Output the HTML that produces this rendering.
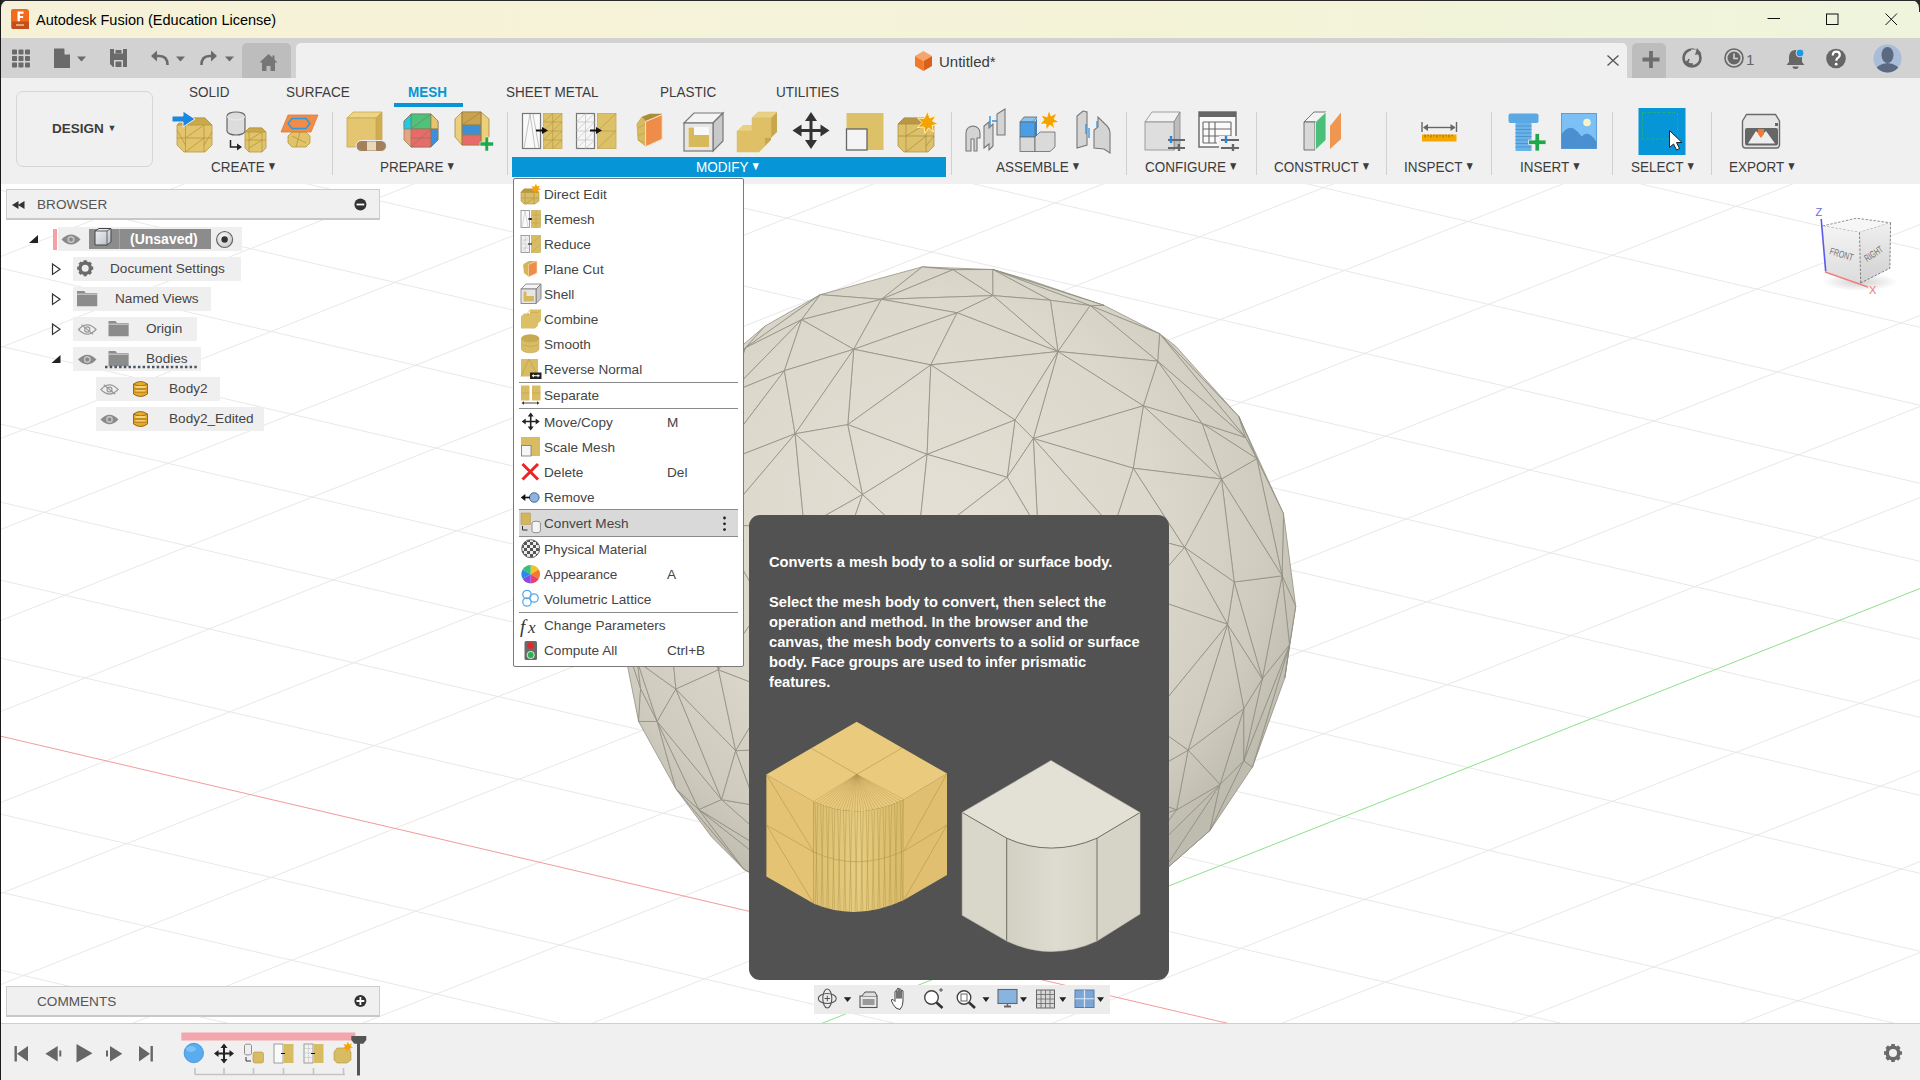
<!DOCTYPE html>
<html><head><meta charset="utf-8">
<style>
*{box-sizing:border-box}
html,body{margin:0;padding:0}
body{width:1920px;height:1080px;overflow:hidden;position:relative;font-family:"Liberation Sans",sans-serif;background:#fff;color:#3c3c3c}
.a{position:absolute}
.t{position:absolute;white-space:nowrap;line-height:1}
#title{left:0;top:0;width:1920px;height:38px;background:linear-gradient(90deg,#f6f2d9 0%,#f4f3d8 60%,#eef5dc 100%)}
#tabrow{left:0;top:38px;width:1920px;height:40px;background:#d2d2d2}
#toolbar{left:0;top:78px;width:1920px;height:106px;background:#f0f0f0}
#vp{left:0;top:184px;width:1920px;height:840px;overflow:hidden}
#timeline{left:0;top:1023px;width:1920px;height:57px;background:#f0f0f0;border-top:1px solid #cfcfcf}
.sep{position:absolute;width:1px;background:#d0d0d0;top:112px;height:63px}
.tab{font-size:13.5px;color:#3c3c3c;top:85px;transform:scaleY(1.08);transform-origin:0 0}
.grp{font-size:13.5px;color:#3c3c3c;top:159px;transform:scaleY(1.14);transform-origin:0 0}
.grp i{font-style:normal;font-size:10.5px;position:relative;top:-1.5px;margin-left:2px}
.mi{position:absolute;left:544px;font-size:13.6px;color:#454545;white-space:nowrap;line-height:1}
.sc{position:absolute;left:667px;font-size:13.6px;color:#454545;line-height:1}
.msep{position:absolute;left:519px;width:219px;height:1px;background:#8a8a8a}
.br{position:absolute;font-size:13.6px;color:#454545;white-space:nowrap;line-height:1}
.bg{position:absolute;background:#efefef}
</style></head><body>
<!-- viewport -->
<div id="vp" class="a">
<svg width="1920" height="840" viewBox="0 184 1920 840" style="position:absolute;left:0;top:0">
<g stroke="#e8e8e8" stroke-width="1"><line x1="0" y1="-278.0" x2="1920" y2="171.3"/><line x1="0" y1="-200.0" x2="1920" y2="249.3"/><line x1="0" y1="-122.0" x2="1920" y2="327.3"/><line x1="0" y1="-44.0" x2="1920" y2="405.3"/><line x1="0" y1="34.0" x2="1920" y2="483.3"/><line x1="0" y1="112.0" x2="1920" y2="561.3"/><line x1="0" y1="190.0" x2="1920" y2="639.3"/><line x1="0" y1="268.0" x2="1920" y2="717.3"/><line x1="0" y1="346.0" x2="1920" y2="795.3"/><line x1="0" y1="424.0" x2="1920" y2="873.3"/><line x1="0" y1="502.0" x2="1920" y2="951.3"/><line x1="0" y1="580.0" x2="1920" y2="1029.3"/><line x1="0" y1="658.0" x2="1920" y2="1107.3"/><line x1="0" y1="814.0" x2="1920" y2="1263.3"/><line x1="0" y1="892.0" x2="1920" y2="1341.3"/><line x1="0" y1="970.0" x2="1920" y2="1419.3"/><line x1="0" y1="1048.0" x2="1920" y2="1497.3"/><line x1="0" y1="1803.8" x2="1920" y2="1043.5"/><line x1="0" y1="1712.8" x2="1920" y2="952.5"/><line x1="0" y1="1621.8" x2="1920" y2="861.5"/><line x1="0" y1="1530.8" x2="1920" y2="770.5"/><line x1="0" y1="1439.8" x2="1920" y2="679.5"/><line x1="0" y1="1257.8" x2="1920" y2="497.5"/><line x1="0" y1="1166.8" x2="1920" y2="406.5"/><line x1="0" y1="1075.8" x2="1920" y2="315.5"/><line x1="0" y1="984.8" x2="1920" y2="224.5"/><line x1="0" y1="893.8" x2="1920" y2="133.5"/><line x1="0" y1="802.8" x2="1920" y2="42.5"/><line x1="0" y1="711.8" x2="1920" y2="-48.5"/><line x1="0" y1="620.8" x2="1920" y2="-139.5"/><line x1="0" y1="529.8" x2="1920" y2="-230.5"/><line x1="0" y1="438.8" x2="1920" y2="-321.5"/><line x1="0" y1="347.8" x2="1920" y2="-412.5"/><line x1="0" y1="256.8" x2="1920" y2="-503.5"/><line x1="0" y1="165.8" x2="1920" y2="-594.5"/></g><line x1="0" y1="736" x2="1920" y2="1185.3" stroke="#f09c9c" stroke-width="1"/><line x1="0" y1="1348.8" x2="1920" y2="588.5" stroke="#8ee08e" stroke-width="1"/>
<defs><radialGradient id="sg" gradientUnits="userSpaceOnUse" cx="930" cy="520" r="400"><stop offset="0" stop-color="#e4e0d5"/><stop offset="0.55" stop-color="#dcd8cc"/><stop offset="0.85" stop-color="#cfccbf"/><stop offset="1" stop-color="#bebcaf"/></radialGradient></defs><g stroke="#8d8b7f" stroke-width="0.75" stroke-linejoin="round" fill="url(#sg)"><polygon points="1030.0,280.3 992.8,269.5 1104.1,305.4"/><polygon points="1284.8,678.0 1289.5,645.0 1252.4,767.1"/><polygon points="1159.6,333.7 1238.9,416.7 1175.8,346.3"/><polygon points="1011.0,937.5 1060.4,927.9 964.1,944.5"/><polygon points="711.7,837.1 744.0,869.4 675.8,788.7"/><polygon points="1178.2,858.4 1210.0,830.4 1161.9,872.6"/><polygon points="707.4,375.2 653.5,455.2 658.6,451.8"/><polygon points="1284.8,678.0 1295.7,606.2 1289.5,645.0"/><polygon points="707.4,375.2 745.5,347.8 765.1,326.0"/><polygon points="1159.6,333.7 1104.1,305.4 1090.2,305.6"/><polygon points="1283.5,513.7 1238.9,416.7 1256.8,458.7"/><polygon points="658.6,451.8 653.5,455.2 632.3,511.5"/><polygon points="820.2,294.7 765.1,326.0 745.5,347.8"/><polygon points="638.6,721.5 640.6,688.6 618.9,622.5"/><polygon points="1090.2,305.6 1104.1,305.4 992.8,269.5"/><polygon points="1159.6,333.7 1245.6,437.5 1238.9,416.7"/><polygon points="1243.8,760.7 1210.0,830.4 1252.4,767.1"/><polygon points="744.0,869.4 821.4,916.1 815.7,902.1"/><polygon points="632.1,568.2 632.3,511.5 618.9,622.5"/><polygon points="1243.8,760.7 1252.4,767.1 1289.5,645.0"/><polygon points="707.4,375.2 658.6,451.8 745.5,347.8"/><polygon points="953.0,269.7 992.8,269.5 922.2,266.9"/><polygon points="1238.9,416.7 1245.6,437.5 1256.8,458.7"/><polygon points="1060.4,927.9 976.3,937.6 964.1,944.5"/><polygon points="1283.5,513.7 1282.1,575.8 1295.7,606.2"/><polygon points="744.0,869.4 698.9,809.6 675.8,788.7"/><polygon points="976.3,937.6 904.2,935.6 964.1,944.5"/><polygon points="638.6,721.5 675.8,788.7 657.2,721.4"/><polygon points="1295.7,606.2 1282.1,575.8 1289.5,645.0"/><polygon points="820.2,294.7 881.4,299.3 922.2,266.9"/><polygon points="744.0,869.4 815.7,902.1 698.9,809.6"/><polygon points="1283.5,513.7 1256.8,458.7 1282.1,575.8"/><polygon points="904.2,935.6 815.7,902.1 821.4,916.1"/><polygon points="658.6,451.8 632.3,511.5 632.1,568.2"/><polygon points="640.6,688.6 637.4,661.5 618.9,622.5"/><polygon points="632.1,568.2 618.9,622.5 637.4,661.5"/><polygon points="1161.9,872.6 1210.0,830.4 1220.1,784.4"/><polygon points="1161.9,872.6 1131.5,871.5 1060.4,927.9"/><polygon points="820.2,294.7 745.5,347.8 801.6,319.7"/><polygon points="638.6,721.5 657.2,721.4 640.6,688.6"/><polygon points="953.0,269.7 922.2,266.9 881.4,299.3"/><polygon points="1157.7,361.2 1245.6,437.5 1159.6,333.7"/><polygon points="1243.8,760.7 1220.1,784.4 1210.0,830.4"/><polygon points="953.0,269.7 993.0,295.6 992.8,269.5"/><polygon points="657.2,721.4 675.8,788.7 698.9,809.6"/><polygon points="1157.7,361.2 1159.6,333.7 1090.2,305.6"/><polygon points="976.3,937.6 895.2,916.3 904.2,935.6"/><polygon points="820.2,294.7 801.6,319.7 881.4,299.3"/><polygon points="1050.4,300.3 1090.2,305.6 992.8,269.5"/><polygon points="1060.4,927.9 1033.4,893.7 976.3,937.6"/><polygon points="730.1,392.9 745.5,347.8 658.6,451.8"/><polygon points="904.2,935.6 895.2,916.3 815.7,902.1"/><polygon points="1256.8,458.7 1245.6,437.5 1202.1,423.5"/><polygon points="1262.3,678.9 1289.5,645.0 1282.1,575.8"/><polygon points="1243.8,760.7 1289.5,645.0 1262.3,678.9"/><polygon points="1161.9,872.6 1220.1,784.4 1131.5,871.5"/><polygon points="657.2,721.4 637.4,661.5 640.6,688.6"/><polygon points="1050.4,300.3 992.8,269.5 993.0,295.6"/><polygon points="665.0,541.5 658.6,451.8 632.1,568.2"/><polygon points="801.6,319.7 745.5,347.8 730.1,392.9"/><polygon points="1060.4,927.9 1131.5,871.5 1033.4,893.7"/><polygon points="810.6,878.4 698.9,809.6 815.7,902.1"/><polygon points="953.0,269.7 881.4,299.3 993.0,295.6"/><polygon points="1256.8,458.7 1221.5,479.0 1282.1,575.8"/><polygon points="1157.7,361.2 1202.1,423.5 1245.6,437.5"/><polygon points="657.2,721.4 698.9,809.6 721.6,799.7"/><polygon points="810.6,878.4 815.7,902.1 895.2,916.3"/><polygon points="632.1,568.2 637.4,661.5 663.6,557.2"/><polygon points="976.3,937.6 971.9,900.0 895.2,916.3"/><polygon points="1243.8,760.7 1243.8,708.6 1220.1,784.4"/><polygon points="810.6,878.4 721.6,799.7 698.9,809.6"/><polygon points="1243.8,760.7 1262.3,678.9 1243.8,708.6"/><polygon points="657.2,721.4 675.9,689.1 637.4,661.5"/><polygon points="730.1,392.9 658.6,451.8 712.1,466.2"/><polygon points="1256.8,458.7 1202.1,423.5 1221.5,479.0"/><polygon points="1176.6,809.9 1131.5,871.5 1220.1,784.4"/><polygon points="1033.4,893.7 971.9,900.0 976.3,937.6"/><polygon points="665.0,541.5 712.1,466.2 658.6,451.8"/><polygon points="1058.0,351.5 1090.2,305.6 1050.4,300.3"/><polygon points="801.6,319.7 730.1,392.9 784.4,370.7"/><polygon points="665.0,541.5 632.1,568.2 663.6,557.2"/><polygon points="1262.3,678.9 1282.1,575.8 1234.2,582.0"/><polygon points="1058.0,351.5 1157.7,361.2 1090.2,305.6"/><polygon points="801.6,319.7 853.7,349.3 881.4,299.3"/><polygon points="657.2,721.4 721.6,799.7 675.9,689.1"/><polygon points="675.9,689.1 663.6,557.2 637.4,661.5"/><polygon points="957.1,312.8 993.0,295.6 881.4,299.3"/><polygon points="1058.0,351.5 1050.4,300.3 993.0,295.6"/><polygon points="1234.2,582.0 1282.1,575.8 1221.5,479.0"/><polygon points="1220.1,784.4 1243.8,708.6 1188.1,750.2"/><polygon points="810.6,878.4 895.2,916.3 872.8,856.7"/><polygon points="755.9,805.5 721.6,799.7 810.6,878.4"/><polygon points="801.6,319.7 784.4,370.7 853.7,349.3"/><polygon points="1143.3,405.8 1202.1,423.5 1157.7,361.2"/><polygon points="1176.6,809.9 1220.1,784.4 1188.1,750.2"/><polygon points="1227.5,624.3 1243.8,708.6 1262.3,678.9"/><polygon points="1176.6,809.9 1105.8,829.6 1131.5,871.5"/><polygon points="1033.4,893.7 1131.5,871.5 1105.8,829.6"/><polygon points="957.1,312.8 881.4,299.3 853.7,349.3"/><polygon points="730.1,392.9 712.1,466.2 784.4,370.7"/><polygon points="971.9,900.0 872.8,856.7 895.2,916.3"/><polygon points="1058.0,351.5 993.0,295.6 957.1,312.8"/><polygon points="1143.3,405.8 1221.5,479.0 1202.1,423.5"/><polygon points="1227.5,624.3 1262.3,678.9 1234.2,582.0"/><polygon points="1058.0,351.5 1143.3,405.8 1157.7,361.2"/><polygon points="735.7,750.7 675.9,689.1 721.6,799.7"/><polygon points="755.9,805.5 810.6,878.4 872.8,856.7"/><polygon points="755.9,805.5 735.7,750.7 721.6,799.7"/><polygon points="1033.4,893.7 1023.0,857.2 971.9,900.0"/><polygon points="665.0,541.5 663.6,557.2 717.9,524.9"/><polygon points="1188.1,750.2 1243.8,708.6 1227.5,624.3"/><polygon points="718.5,669.8 663.6,557.2 675.9,689.1"/><polygon points="665.0,541.5 717.9,524.9 712.1,466.2"/><polygon points="1033.4,893.7 1105.8,829.6 1023.0,857.2"/><polygon points="1119.4,789.4 1176.6,809.9 1188.1,750.2"/><polygon points="1119.4,789.4 1105.8,829.6 1176.6,809.9"/><polygon points="795.1,433.8 784.4,370.7 712.1,466.2"/><polygon points="1184.5,547.4 1234.2,582.0 1221.5,479.0"/><polygon points="930.8,364.9 957.1,312.8 853.7,349.3"/><polygon points="735.7,750.7 718.5,669.8 675.9,689.1"/><polygon points="1058.0,351.5 957.1,312.8 930.8,364.9"/><polygon points="853.7,349.3 784.4,370.7 795.1,433.8"/><polygon points="718.5,669.8 717.9,524.9 663.6,557.2"/><polygon points="971.9,900.0 944.3,840.6 872.8,856.7"/><polygon points="1143.3,405.8 1133.2,468.2 1221.5,479.0"/><polygon points="1023.0,857.2 944.3,840.6 971.9,900.0"/><polygon points="1184.5,547.4 1227.5,624.3 1234.2,582.0"/><polygon points="1119.4,789.4 1023.0,857.2 1105.8,829.6"/><polygon points="1188.1,750.2 1227.5,624.3 1147.9,721.6"/><polygon points="795.1,433.8 712.1,466.2 717.9,524.9"/><polygon points="755.9,805.5 872.8,856.7 873.1,790.1"/><polygon points="1184.5,547.4 1221.5,479.0 1133.2,468.2"/><polygon points="755.9,805.5 826.0,747.0 735.7,750.7"/><polygon points="1058.0,351.5 1033.3,438.5 1143.3,405.8"/><polygon points="1119.4,789.4 1188.1,750.2 1147.9,721.6"/><polygon points="930.8,364.9 853.7,349.3 847.8,424.6"/><polygon points="853.7,349.3 795.1,433.8 847.8,424.6"/><polygon points="735.7,750.7 772.0,690.3 718.5,669.8"/><polygon points="1058.0,351.5 930.8,364.9 1015.0,420.0"/><polygon points="873.1,790.1 872.8,856.7 944.3,840.6"/><polygon points="1184.5,547.4 1143.0,595.2 1227.5,624.3"/><polygon points="755.9,805.5 873.1,790.1 826.0,747.0"/><polygon points="718.5,669.8 763.3,605.9 717.9,524.9"/><polygon points="1227.5,624.3 1143.0,595.2 1147.9,721.6"/><polygon points="1143.3,405.8 1033.3,438.5 1133.2,468.2"/><polygon points="1119.4,789.4 1036.4,742.4 1023.0,857.2"/><polygon points="965.7,780.4 944.3,840.6 1023.0,857.2"/><polygon points="826.0,747.0 772.0,690.3 735.7,750.7"/><polygon points="795.1,433.8 717.9,524.9 804.2,527.4"/><polygon points="1058.0,351.5 1015.0,420.0 1033.3,438.5"/><polygon points="718.5,669.8 772.0,690.3 763.3,605.9"/><polygon points="1119.4,789.4 1147.9,721.6 1036.4,742.4"/><polygon points="1113.3,528.6 1184.5,547.4 1133.2,468.2"/><polygon points="717.9,524.9 763.3,605.9 804.2,527.4"/><polygon points="965.7,780.4 873.1,790.1 944.3,840.6"/><polygon points="927.1,454.4 930.8,364.9 847.8,424.6"/><polygon points="965.7,780.4 1023.0,857.2 1036.4,742.4"/><polygon points="862.5,494.5 847.8,424.6 795.1,433.8"/><polygon points="1113.3,528.6 1143.0,595.2 1184.5,547.4"/><polygon points="927.1,454.4 1015.0,420.0 930.8,364.9"/><polygon points="1113.3,528.6 1133.2,468.2 1033.3,438.5"/><polygon points="826.0,747.0 873.1,790.1 852.7,753.7"/><polygon points="862.5,494.5 795.1,433.8 804.2,527.4"/><polygon points="1100.1,640.4 1147.9,721.6 1143.0,595.2"/><polygon points="965.7,780.4 852.7,753.7 873.1,790.1"/><polygon points="1095.5,663.6 1036.4,742.4 1147.9,721.6"/><polygon points="763.3,605.9 772.0,690.3 840.9,676.5"/><polygon points="826.0,747.0 840.9,676.5 772.0,690.3"/><polygon points="1100.1,640.4 1095.5,663.6 1147.9,721.6"/><polygon points="1033.3,438.5 1015.0,420.0 1007.2,477.3"/><polygon points="927.1,454.4 847.8,424.6 862.5,494.5"/><polygon points="826.0,747.0 852.7,753.7 840.9,676.5"/><polygon points="1100.1,640.4 1143.0,595.2 1113.3,528.6"/><polygon points="840.5,557.9 804.2,527.4 763.3,605.9"/><polygon points="927.1,454.4 1007.2,477.3 1015.0,420.0"/><polygon points="1037.9,529.3 1113.3,528.6 1033.3,438.5"/><polygon points="965.7,780.4 949.8,704.9 852.7,753.7"/><polygon points="840.5,557.9 763.3,605.9 840.9,676.5"/><polygon points="862.5,494.5 804.2,527.4 840.5,557.9"/><polygon points="965.7,780.4 1036.4,742.4 949.8,704.9"/><polygon points="1037.9,529.3 1033.3,438.5 1007.2,477.3"/><polygon points="1037.9,529.3 1100.1,640.4 1113.3,528.6"/><polygon points="852.7,753.7 949.8,704.9 840.9,676.5"/><polygon points="1004.9,640.6 1036.4,742.4 1095.5,663.6"/><polygon points="927.1,454.4 862.5,494.5 917.7,546.2"/><polygon points="1004.9,640.6 1095.5,663.6 1100.1,640.4"/><polygon points="927.1,454.4 917.7,546.2 1007.2,477.3"/><polygon points="862.5,494.5 840.5,557.9 917.7,546.2"/><polygon points="1004.9,640.6 949.8,704.9 1036.4,742.4"/><polygon points="1004.9,640.6 1100.1,640.4 1037.9,529.3"/><polygon points="910.8,619.2 840.5,557.9 840.9,676.5"/><polygon points="1037.9,529.3 1007.2,477.3 917.7,546.2"/><polygon points="910.8,619.2 840.9,676.5 949.8,704.9"/><polygon points="910.8,619.2 917.7,546.2 840.5,557.9"/><polygon points="1004.9,640.6 1037.9,529.3 917.7,546.2"/><polygon points="1004.9,640.6 910.8,619.2 949.8,704.9"/><polygon points="1004.9,640.6 917.7,546.2 910.8,619.2"/></g>
</svg>
</div>

<!-- title bar -->
<div id="title" class="a"></div>
<div class="a" style="left:0;top:0;width:1920px;height:1px;background:#2a2a2a"></div>
<svg class="a" style="left:0;top:0" width="1920" height="12"><path d="M0,0 H9 A8,8 0 0 0 1,8 V12 H0 Z" fill="#2a2a2a"/><path d="M1920,0 H1911 A8,8 0 0 1 1919,8 V12 H1920 Z" fill="#2a2a2a"/></svg>
<div class="t" style="left:36px;top:13px;font-size:14.5px;color:#000">Autodesk Fusion (Education License)</div>

<!-- tab row -->
<div id="tabrow" class="a"></div>
<div class="a" style="left:242px;top:43px;width:49px;height:35px;background:#bdbdbd;border-radius:5px 5px 0 0"></div>
<div class="a" style="left:296px;top:43px;width:1331px;height:35px;background:#f0f0f0;border-radius:5px 5px 0 0"></div>
<div class="a" style="left:1632px;top:43px;width:34px;height:35px;background:#bdbdbd;border-radius:5px 5px 0 0"></div>
<div class="t" style="left:939px;top:54px;font-size:15px;color:#3c3c3c">Untitled*</div>

<!-- toolbar -->
<div id="toolbar" class="a"></div>
<div class="a" style="left:16px;top:91px;width:137px;height:76px;border:1.5px solid #d6d6d6;border-radius:7px;background:#f0f0f0"></div>
<div class="t" style="left:52px;top:122px;font-size:13.5px;font-weight:bold;color:#3c3c3c">DESIGN <span style="font-size:9px;position:relative;top:-2px">&#9660;</span></div>
<div class="t tab" style="left:189px">SOLID</div>
<div class="t tab" style="left:286px">SURFACE</div>
<div class="t tab" style="left:408px;color:#0696d7;font-weight:bold">MESH</div>
<div class="a" style="left:394px;top:103px;width:69px;height:4px;background:#0696d7"></div>
<div class="t tab" style="left:506px">SHEET METAL</div>
<div class="t tab" style="left:660px">PLASTIC</div>
<div class="t tab" style="left:776px">UTILITIES</div>

<div class="sep" style="left:332px"></div>
<div class="sep" style="left:507px"></div>
<div class="sep" style="left:951px"></div>
<div class="sep" style="left:1126px"></div>
<div class="sep" style="left:1256px"></div>
<div class="sep" style="left:1386px"></div>
<div class="sep" style="left:1491px"></div>
<div class="sep" style="left:1612px"></div>
<div class="sep" style="left:1711px"></div>

<div class="a" style="left:512px;top:157px;width:434px;height:20px;background:#0696d7"></div>
<div class="t grp" style="left:211px">CREATE<i>&#9660;</i></div>
<div class="t grp" style="left:380px">PREPARE<i>&#9660;</i></div>
<div class="t grp" style="left:696px;color:#fff">MODIFY<i>&#9660;</i></div>
<div class="t grp" style="left:996px">ASSEMBLE<i>&#9660;</i></div>
<div class="t grp" style="left:1145px">CONFIGURE<i>&#9660;</i></div>
<div class="t grp" style="left:1274px">CONSTRUCT<i>&#9660;</i></div>
<div class="t grp" style="left:1404px">INSPECT<i>&#9660;</i></div>
<div class="t grp" style="left:1520px">INSERT<i>&#9660;</i></div>
<div class="t grp" style="left:1631px">SELECT<i>&#9660;</i></div>
<div class="t grp" style="left:1729px">EXPORT<i>&#9660;</i></div>

<!-- browser -->
<div class="a" style="left:6px;top:189px;width:374px;height:31px;background:#f0f0f0;border:1px solid #cdcdcd;border-bottom:2px solid #c8c8c8"></div>
<div class="br" style="left:37px;top:198px;color:#555">BROWSER</div>

<div class="bg" style="left:58px;top:227px;width:184px;height:24px"></div>
<div class="a" style="left:53px;top:229px;width:3.5px;height:21px;background:#f4a0a8"></div>
<div class="a" style="left:89px;top:229px;width:122px;height:20px;background:#8c8c8c"></div>
<div class="a" style="left:119px;top:229px;width:1px;height:20px;background:#a4a4a4"></div>
<div class="br" style="left:130px;top:232px;font-weight:bold;color:#fff;font-size:14px">(Unsaved)</div>
<div class="bg" style="left:73px;top:257px;width:168px;height:24px"></div>
<div class="br" style="left:110px;top:262px">Document Settings</div>
<div class="bg" style="left:73px;top:287px;width:138px;height:24px"></div>
<div class="br" style="left:115px;top:292px">Named Views</div>
<div class="bg" style="left:73px;top:317px;width:124px;height:24px"></div>
<div class="br" style="left:146px;top:322px">Origin</div>
<div class="bg" style="left:73px;top:347px;width:128px;height:24px"></div>
<div class="br" style="left:146px;top:352px">Bodies</div>
<div class="bg" style="left:96px;top:377px;width:124px;height:24px"></div>
<div class="br" style="left:169px;top:382px">Body2</div>
<div class="bg" style="left:96px;top:407px;width:168px;height:24px"></div>
<div class="br" style="left:169px;top:412px">Body2_Edited</div>

<!-- comments -->
<div class="a" style="left:6px;top:986px;width:374px;height:31px;background:#f0f0f0;border:1px solid #cdcdcd;border-bottom:2px solid #c8c8c8"></div>
<div class="br" style="left:37px;top:995px;color:#555">COMMENTS</div>

<!-- menu -->
<div class="a" style="left:513px;top:178px;width:231px;height:489px;background:#fff;border:1px solid #7a7a7a;border-radius:2px"></div>
<div class="a" style="left:519px;top:509px;width:219px;height:28px;background:#d9d9d9;border-top:1px solid #8a8a8a;border-bottom:1px solid #8a8a8a"></div>
<div class="mi" style="top:188px">Direct Edit</div>
<div class="mi" style="top:213px">Remesh</div>
<div class="mi" style="top:238px">Reduce</div>
<div class="mi" style="top:263px">Plane Cut</div>
<div class="mi" style="top:288px">Shell</div>
<div class="mi" style="top:313px">Combine</div>
<div class="mi" style="top:338px">Smooth</div>
<div class="mi" style="top:363px">Reverse Normal</div>
<div class="msep" style="top:382px"></div>
<div class="mi" style="top:389px">Separate</div>
<div class="msep" style="top:408px"></div>
<div class="mi" style="top:416px">Move/Copy</div><div class="sc" style="top:416px">M</div>
<div class="mi" style="top:441px">Scale Mesh</div>
<div class="mi" style="top:466px">Delete</div><div class="sc" style="top:466px">Del</div>
<div class="mi" style="top:491px">Remove</div>
<div class="mi" style="top:517px">Convert Mesh</div>
<div class="mi" style="top:543px">Physical Material</div>
<div class="mi" style="top:568px">Appearance</div><div class="sc" style="top:568px">A</div>
<div class="mi" style="top:593px">Volumetric Lattice</div>
<div class="msep" style="top:612px"></div>
<div class="mi" style="top:619px">Change Parameters</div>
<div class="mi" style="top:644px">Compute All</div><div class="sc" style="top:644px">Ctrl+B</div>

<!-- tooltip -->
<div class="a" style="left:749px;top:515px;width:420px;height:465px;background:#525252;border-radius:11px"></div>
<div class="a" style="left:769px;top:552px;width:400px;white-space:nowrap;font-size:14.7px;font-weight:bold;color:#fff;line-height:20px">Converts a mesh body to a solid or surface body.<br><br>Select the mesh body to convert, then select the<br>operation and method. In the browser and the<br>canvas, the mesh body converts to a solid or surface<br>body. Face groups are used to infer prismatic<br>features.</div>

<!-- timeline -->
<div id="timeline" class="a"></div>
<!-- nav bar -->
<div class="a" style="left:814px;top:985px;width:296px;height:29px;background:#ececec"></div>

<!-- left window border -->
<div class="a" style="left:0;top:0;width:1px;height:1080px;background:#1a1a1a"></div>
<svg class="a" style="left:0;top:0;pointer-events:none" width="1920" height="1080" viewBox="0 0 1920 1080">
<!-- CREATE 1: insert mesh -->
<g stroke="#b8973c" stroke-width="0.8">
<polygon points="184,118 205,118 212,125 212,145 205,152 184,152 177,145 177,125" fill="#e2c46c"/>
<polygon points="184,118 205,118 212,125 177,125" fill="#c9a94c"/>
<line x1="185.5" y1="125" x2="185.5" y2="152"/><line x1="204" y1="125" x2="204" y2="152"/>
<line x1="177" y1="138" x2="212" y2="138"/><line x1="185.5" y1="138" x2="204" y2="125"/><line x1="185.5" y1="152" x2="204" y2="138"/><line x1="177" y1="130" x2="185.5" y2="145"/><line x1="204" y1="145" x2="212" y2="132"/>
</g>
<path d="M172,116 h11 v-5 l12,8 l-12,8 v-5 h-11 z" fill="#1a88e0" stroke="#f0f0f0" stroke-width="1"/>
<!-- CREATE 2: tessellate -->
<path d="M227,116 a9,4 0 0 1 18,0 v15 a9,4 0 0 1 -18,0 z" fill="#dcdcdc" stroke="#666" stroke-width="1.2"/>
<path d="M227,116 a9,4 0 0 0 18,0" fill="none" stroke="#eee" stroke-width="1"/>
<g stroke="#b8973c" stroke-width="0.8"><polygon points="249,128 262,128 266,132 266,148 262,152 249,152 245,148 245,132" fill="#e0c36a"/>
<line x1="249" y1="132" x2="249" y2="152"/><line x1="262" y1="132" x2="262" y2="152"/><line x1="245" y1="140" x2="266" y2="140"/><line x1="249" y1="140" x2="262" y2="132"/><line x1="249" y1="148" x2="262" y2="140"/><polygon points="249,128 262,128 266,132 245,132" fill="#c9a94c"/></g>
<path d="M230.5,140 v7 h8" fill="none" stroke="#222" stroke-width="1.5"/><path d="M237,143.5 l5,3.5 l-5,3.5 z" fill="#222"/>
<!-- CREATE 3: face group plane -->
<g stroke="#b8973c" stroke-width="0.8"><polygon points="292,132 306,132 310,136 310,143 306,147 292,147 288,143 288,136" fill="#e0c36a"/><line x1="292" y1="136" x2="306" y2="143"/><line x1="300" y1="132" x2="296" y2="147"/></g>
<polygon points="288,115 318,115 311,132 281,132" fill="#ef8c4a" stroke="#e27a35" stroke-width="0.8"/>
<polygon points="288,123.5 292,118.5 306,118.5 310,123.5 306,128.5 292,128.5" fill="#ef8c4a" stroke="#2a9ae0" stroke-width="1.4"/>
<!-- PREPARE 1: repair -->
<polygon points="347,118 353,112 382,112 376,118" fill="#edd488" stroke="#c9a94c" stroke-width="0.8"/>
<polygon points="376,118 382,112 382,140 376,146" fill="#cfac52" stroke="#c9a94c" stroke-width="0.8"/>
<rect x="347" y="118" width="29" height="29" fill="#e4c670" stroke="#c9a94c" stroke-width="0.8"/>
<rect x="356" y="140.5" width="30.5" height="11" rx="5.5" fill="#a3805a" stroke="#f0f0f0" stroke-width="1"/>
<rect x="367" y="141.5" width="9" height="9" fill="#e9d8bb"/>
<!-- PREPARE 2: face groups colored -->
<g stroke="#8d7a50" stroke-width="0.7">
<polygon points="411,114 431,114 438,121 438,140 431,147 411,147 404,140 404,121" fill="#e9a284"/>
<polygon points="411,114 431,114 431,129 411,129" fill="#4cc27a"/>
<polygon points="404,121 411,114 411,129 404,129" fill="#20c9e0"/>
<polygon points="431,114 438,121 438,129 431,129" fill="#e8c56a"/>
<polygon points="411,129 431,129 431,147 411,147" fill="#e96a6a"/>
<polygon points="431,129 438,129 438,140 431,147" fill="#3f8fd8"/>
<line x1="411" y1="129" x2="431" y2="114"/><line x1="411" y1="147" x2="431" y2="129"/><line x1="411" y1="138" x2="431" y2="138"/>
</g>
<!-- PREPARE 3 -->
<g stroke="#9c8040" stroke-width="0.7">
<polygon points="462,112 481,112 489,119 489,137 481,145 462,145 455,137 455,119" fill="#ebcf7a"/>
<polygon points="462,112 481,112 481,125 462,125" fill="#c9a350"/>
<polygon points="462,125 481,125 481,135 462,135" fill="#3f8fd8"/>
<polygon points="462,135 481,135 481,145 462,145" fill="#e96a6a"/>
<line x1="462" y1="112" x2="462" y2="145"/><line x1="481" y1="112" x2="481" y2="145"/><line x1="462" y1="125" x2="481" y2="112"/>
</g>
<path d="M485,137 h3.5 v5 h5 v4 h-5 v5 h-3.5 v-5 h-5 v-4 h5 z" fill="#1ea84a" stroke="#f0f0f0" stroke-width="0.6"/>
<!-- MODIFY 1: remesh -->
<rect x="522.5" y="113.5" width="18" height="35" fill="#fafafa" stroke="#777" stroke-width="1.2"/>
<path d="M524,148 L530,114 L535,148 M533,114 L539,148" fill="none" stroke="#aaa" stroke-width="0.7"/>
<rect x="543.5" y="113.5" width="18.5" height="35" fill="#dcc168" stroke="#c9aa50" stroke-width="0.8"/>
<path d="M543.5,122 h18.5 M543.5,131 h18.5 M543.5,140 h18.5 M552.7,113.5 v35 M543.5,122 l9.2,-8.5 M552.7,122 l9.3,-8.5 M543.5,131 l9.2,-9 M552.7,131 l9.3,-9 M543.5,140 l9.2,-9 M552.7,140 l9.3,-9 M543.5,148.5 l9.2,-8.5 M552.7,148.5 l9.3,-8.5" stroke="#b39440" stroke-width="0.6" fill="none"/>
<path d="M536,130.5 h7" stroke="#111" stroke-width="2"/><path d="M542,127 l6,3.5 l-6,3.5 z" fill="#111"/>
<!-- MODIFY 2: reduce -->
<rect x="576.5" y="113.5" width="18" height="35" fill="#f6f6f6" stroke="#777" stroke-width="1.2"/>
<path d="M576.5,122 h18 M576.5,131 h18 M576.5,140 h18 M585.5,113.5 v35 M576.5,122 l9,-8.5 M585.5,122 l9,-8.5 M576.5,131 l9,-9 M585.5,131 l9,-9 M576.5,140 l9,-9 M585.5,140 l9,-9 M576.5,148.5 l9,-8.5 M585.5,148.5 l9,-8.5" stroke="#b8b8b8" stroke-width="0.6" fill="none"/>
<rect x="597.5" y="113.5" width="18.5" height="35" fill="#dcc168" stroke="#c9aa50" stroke-width="0.8"/>
<path d="M597.5,131 l18.5,-17.5 M597.5,148.5 l18.5,-17.5 M597.5,131 h18.5" stroke="#b39440" stroke-width="0.6" fill="none"/>
<path d="M590,130.5 h7" stroke="#111" stroke-width="2"/><path d="M596,127 l6,3.5 l-6,3.5 z" fill="#111"/>
<!-- MODIFY 3: plane cut -->
<polygon points="642,117 650,114 662,114 646,121 646,146.5 638,140 637,124" fill="#d8bb60" stroke="#c3a24a" stroke-width="0.7"/>
<polygon points="642,117 650,114 662,114 646,121" fill="#a98c3c"/>
<path d="M638,128 l8,-4 M638,136 l8,-4 M638,140 l8,3" stroke="#b89a45" stroke-width="0.6"/>
<polygon points="645.6,121.5 662.2,114.6 662.2,139.2 645.6,146.7" fill="#ef8c4a" stroke="#f7e6c8" stroke-width="1"/>
<!-- MODIFY 4: shell -->
<polygon points="684,123 694,113 723,113 713,123" fill="#f4f4f4" stroke="#777" stroke-width="1.2"/>
<polygon points="713,123 723,113 723,141 713,151" fill="#c9c9c9" stroke="#777" stroke-width="1.2"/>
<rect x="684" y="123" width="29" height="28" fill="#e6e6e6" stroke="#777" stroke-width="1.2"/>
<rect x="688" y="127" width="21" height="20" fill="#f8f8f8"/>
<path d="M688.5,127.5 h5.5 v7.5 h15 v12 h-20.5 z" fill="#d6b95c"/>
<!-- MODIFY 5: combine -->
<polygon points="752,118 758,112 777,112 771,118" fill="#ead083" stroke="#dcc080" stroke-width="0.5"/>
<polygon points="771,118 777,112 777,132 771,138" fill="#c7a74c"/>
<polygon points="737,131 743,125 752,125 752,131" fill="#ead083"/>
<path d="M752,118 h19 v20 h-6 v8 l-6,6 h-22 v-21 h15 z" fill="#dfc067" stroke="#d8bd70" stroke-width="0.5"/>
<polygon points="765,146 771,140 771,138 765,138" fill="#c7a74c"/>
<!-- MODIFY 6: move -->
<g fill="#333"><path d="M811,112 l-6,9 h4.5 v8 h-8 v-4.5 l-9,6 l9,6 v-4.5 h8 v8 h-4.5 l6,9 l6,-9 h-4.5 v-8 h8 v4.5 l9,-6 l-9,-6 v4.5 h-8 v-8 h4.5 z"/></g>
<!-- MODIFY 7: scale -->
<rect x="846.5" y="113" width="37" height="37" fill="#dcc168"/>
<rect x="846.5" y="129" width="20.5" height="21" fill="#f4f4f4" stroke="#666" stroke-width="1.3"/>
<!-- MODIFY 8: direct edit -->
<g stroke="#a88a3a" stroke-width="0.7">
<polygon points="904,118 928,118 934,124 934,146 928,152 904,152 898,146 898,124" fill="#dcc06a"/>
<polygon points="904,118 928,118 934,124 898,124" fill="#b89848"/>
<path d="M906,124 v28 M926,124 v28 M898,136 h36 M906,136 l20,-12 M906,152 l20,-16 M926,146 l8,-10" fill="none"/>
</g>
<polygon points="927.7,111.5 929.8,118 936,115.5 932.5,121 938.5,124 932,125.5 933.5,132 928.5,128 925,133.5 924,127 917.5,127.5 922,122.5 917.5,118 924,118.5" fill="#f5a300" stroke="#fff3c0" stroke-width="1"/>
<!-- ASSEMBLE 1: joint -->
<g fill="#d4d4d4" stroke="#777" stroke-width="1.1">
<path d="M966,151 v-18 q0,-6 7,-7 q7,1 7,7 v5 h-3 v13 h-3 v-12 h-3 v12 z"/>
<path d="M984,148 v-22 l5,-4 v6 l4,-4 v22 l-4,4 v-6 z"/>
<path d="M997,135 v-21 l8,-5 v26 z"/>
</g>
<path d="M990,126 v-10 M992,121 h5" stroke="#3a8fd6" stroke-width="1.4"/>
<!-- ASSEMBLE 2: new component -->
<polygon points="1020,122 1024,117 1037,117 1033,122" fill="#8cc4f0" stroke="#666" stroke-width="0.8"/>
<rect x="1020" y="122" width="15" height="15" fill="#4a9ee6" stroke="#666" stroke-width="0.8"/>
<polygon points="1035,122 1037,118 1037,137 1035,137" fill="#3a7fc0"/>
<rect x="1020" y="137" width="15" height="14.5" fill="#d8d8d8" stroke="#666" stroke-width="0.8"/>
<polygon points="1035,137 1040,132 1055,132 1055,147 1050,151.5 1035,151.5" fill="#dadada" stroke="#666" stroke-width="0.8"/>
<polygon points="1049,110 1051,116 1057,113 1054,119 1059,122 1053,123 1055,129 1050,125 1046,130 1046,124 1040,124 1044,120 1041,115 1047,117" fill="#f5a300" stroke="#fff" stroke-width="0.6"/>
<!-- ASSEMBLE 3: rigid group -->
<g fill="#d4d4d4" stroke="#777" stroke-width="1.1">
<path d="M1077,148 v-32 l6,-5 l4,1 v33 z"/>
<path d="M1094,148 v-18 l4,-3 v-10 l6,6 q6,5 6,10 v20 l-6,-4 z" />
</g>
<path d="M1086,124 v10 M1097,121 v6 M1089,128 v10" stroke="#3a8fd6" stroke-width="1.3"/>
<!-- CONFIGURE 1 -->
<polygon points="1145,122 1152,112 1180,112 1174,122" fill="#f2f2f2" stroke="#8a8a8a" stroke-width="0.8"/>
<polygon points="1174,122 1180,112 1180,144 1174,150" fill="#bdbdbd" stroke="#8a8a8a" stroke-width="0.8"/>
<rect x="1145" y="122" width="29" height="28" fill="#dedede" stroke="#8a8a8a" stroke-width="0.8"/>
<path d="M1168,140 h17 M1168,148 h17" stroke="#666" stroke-width="2.2"/>
<path d="M1171,136 v7" stroke="#2a86d0" stroke-width="2.4"/><path d="M1179,144 v7" stroke="#666" stroke-width="2.4"/>
<!-- CONFIGURE 2 -->
<rect x="1199" y="112" width="37" height="35" fill="#fafafa" stroke="#666" stroke-width="1.4"/>
<rect x="1199" y="112" width="37" height="5" fill="#666"/>
<path d="M1203,122 h28 M1203,129 h28 M1203,136 h28 M1203,143 h14 M1203,122 v21 M1209,122 v21 M1215,122 v21 M1231,122 v14" stroke="#666" stroke-width="1.1" fill="none"/>
<rect x="1219" y="136" width="20" height="16" fill="#f0f0f0"/>
<path d="M1221,140 h18 M1221,148 h18" stroke="#666" stroke-width="2.2"/>
<path d="M1226,136 v7" stroke="#2a86d0" stroke-width="2.4"/><path d="M1233,144 v7" stroke="#666" stroke-width="2.4"/>
<!-- CONSTRUCT -->
<polygon points="1304,122 1314,112 1326,112 1316,122" fill="#f4f4f4" stroke="#666" stroke-width="0.9"/>
<polygon points="1304,122 1315,122 1315,150 1304,150" fill="#d8d8d8" stroke="#666" stroke-width="0.9"/>
<polygon points="1315.5,122 1326,112 1326,140 1315.5,150" fill="#4bc07a" stroke="#e8f8ee" stroke-width="0.8"/>
<polygon points="1330,126 1341,112.5 1341,139 1330,149" fill="#ef9650"/>
<!-- INSPECT -->
<path d="M1422,122 v10 M1456.5,122 v10" stroke="#666" stroke-width="1.4"/>
<path d="M1424,127.5 h31" stroke="#666" stroke-width="1.4"/>
<path d="M1423,127.5 l5,-3.5 v7 z M1455.5,127.5 l-5,-3.5 v7 z" fill="#666"/>
<rect x="1422" y="134.5" width="34.5" height="7" fill="#f5a800"/>
<path d="M1425,134.5 v3 M1428,134.5 v2 M1431,134.5 v3 M1434,134.5 v2 M1437,134.5 v3 M1440,134.5 v2 M1443,134.5 v3 M1446,134.5 v2 M1449,134.5 v3 M1452,134.5 v2" stroke="#8a5a00" stroke-width="0.8"/>
<!-- INSERT 1: bolt -->
<rect x="1508.5" y="113.5" width="30" height="9.5" rx="2" fill="#5aa8e4"/>
<rect x="1515.5" y="123" width="16" height="28" fill="#6ab3ea"/>
<path d="M1515.5,126 h16 M1515.5,129.5 h16 M1515.5,133 h16 M1515.5,136.5 h16 M1515.5,140 h16 M1515.5,143.5 h16 M1515.5,147 h16" stroke="#4a90cc" stroke-width="0.9"/>
<path d="M1535,133.5 h4.5 v6.5 h6.5 v4.5 h-6.5 v6.5 h-4.5 v-6.5 h-6.5 v-4.5 h6.5 z" fill="#1ea84a" stroke="#f0f0f0" stroke-width="0.8"/>
<!-- INSERT 2: image -->
<rect x="1561.5" y="113.5" width="35" height="35" fill="#7cc0f5" stroke="#4a90d0" stroke-width="0.8"/>
<path d="M1561.5,148.5 v-14 q6,-9 12,-6 q5,3 8,8 q4,-4 8,-2 q4,2 7,8 v6 z" fill="#4a90d0"/>
<circle cx="1587" cy="122.5" r="3.8" fill="#f8f4c8"/>
<!-- SELECT -->
<rect x="1638.5" y="108" width="47" height="47" fill="#0696d7"/>
<rect x="1642.5" y="112.5" width="35" height="26.5" fill="none" stroke="#27b070" stroke-width="0.9" stroke-dasharray="3,2"/>
<path d="M1669.5,130.5 v17 l4,-3.5 l3,6 l3,-1.5 l-3,-6 h5.5 z" fill="#fff" stroke="#222" stroke-width="1"/>
<!-- EXPORT -->
<path d="M1742.5,121 l4,-6.5 h29 l4,6.5 v24 q0,3 -3,3 h-31 q-3,0 -3,-3 z" fill="#e6e6e6" stroke="#6a6a6a" stroke-width="1.4"/>
<rect x="1745" y="128" width="33" height="17.5" rx="2" fill="#666"/>
<rect x="1775" y="123" width="3" height="3" fill="#666"/>
<polygon points="1748,143.5 1756,131 1761,136 1766,131 1775,143.5" fill="#eeeeee"/>
<path d="M1758,129 h6 v5 l-3,4 l-3,-4 z" fill="#f07a30"/>

<!-- fusion logo -->
<path d="M11,11 q0,-2 2,-2 h13 q3,0 3,3 v17 h-16 q-2,0 -2,-2 z" fill="#f26a1b"/>
<rect x="12" y="21.5" width="17" height="7.5" fill="#c2501c"/>
<path d="M17.5,11.5 h6 v2.2 h-3.6 v2.2 h3.2 v2.1 h-3.2 v3.3 h-2.4 z" fill="#fff"/>
<rect x="16" y="24" width="8" height="2" fill="#e9a27a"/>
<!-- window controls -->
<path d="M1767.5,18.5 h12.5" stroke="#111" stroke-width="1"/>
<rect x="1826.5" y="14" width="11.5" height="10.5" fill="none" stroke="#111" stroke-width="1"/>
<path d="M1885.5,13.5 l11.5,11.5 M1897,13.5 l-11.5,11.5" stroke="#111" stroke-width="1"/>
<!-- grid -->
<g fill="#6a6a6a">
<rect x="12" y="49.5" width="5" height="5" rx="0.8"/><rect x="18.5" y="49.5" width="5" height="5" rx="0.8"/><rect x="25" y="49.5" width="5" height="5" rx="0.8"/>
<rect x="12" y="56" width="5" height="5" rx="0.8"/><rect x="18.5" y="56" width="5" height="5" rx="0.8"/><rect x="25" y="56" width="5" height="5" rx="0.8"/>
<rect x="12" y="62.5" width="5" height="5" rx="0.8"/><rect x="18.5" y="62.5" width="5" height="5" rx="0.8"/><rect x="25" y="62.5" width="5" height="5" rx="0.8"/>
</g>
<!-- file -->
<path d="M54,48.5 h10 l6,6 v13.5 h-16 z" fill="#6a6a6a"/>
<path d="M64.5,48.5 v6 h5.5" fill="#d2d2d2"/>
<path d="M77,56.5 h9 l-4.5,5 z" fill="#6a6a6a"/>
<!-- save -->
<path d="M110,49 h17 v18 h-14 l-3,-3 z" fill="#6a6a6a"/>
<rect x="114" y="49" width="9" height="4.5" fill="#d2d2d2"/>
<rect x="115.5" y="50" width="6" height="3.5" fill="#6a6a6a"/>
<rect x="114" y="60" width="9" height="7" fill="#d2d2d2"/>
<rect x="115.5" y="61.5" width="6" height="5.5" fill="#6a6a6a"/>
<!-- undo/redo -->
<path d="M167.5,65 q0,-9 -8,-9 h-5" fill="none" stroke="#6a6a6a" stroke-width="2.6"/>
<path d="M151,56 l6,-5.5 v11 z" fill="#6a6a6a"/>
<path d="M176,56.5 h9 l-4.5,5 z" fill="#6a6a6a"/>
<path d="M201.5,65 q0,-9 8,-9 h5" fill="none" stroke="#6a6a6a" stroke-width="2.6"/>
<path d="M217,56 l-6,-5.5 v11 z" fill="#6a6a6a"/>
<path d="M225,56.5 h9 l-4.5,5 z" fill="#6a6a6a"/>
<!-- home -->
<path d="M268.5,54 l-9,8.5 h2.5 v8.5 h4.5 v-5 h4 v5 h4.5 v-8.5 h2.5 l-3,-3 v-4 h-2 v2 z" fill="#767676"/>
<!-- doc tab -->
<polygon points="915,56 923.5,51 932,56 923.5,61" fill="#f8a46a"/>
<polygon points="915,56 923.5,61 923.5,71 915,66" fill="#f07a2a"/>
<polygon points="923.5,61 932,56 932,66 923.5,71" fill="#d9601a"/>
<path d="M1607.5,55.5 l11,10 M1618.5,55.5 l-11,10" stroke="#555" stroke-width="1.3"/>
<!-- plus -->
<path d="M1651,51 v17 M1642.5,59.5 h17" stroke="#6e6e6e" stroke-width="3.8"/>
<!-- sync -->
<circle cx="1692" cy="58" r="8.5" fill="none" stroke="#666" stroke-width="2.6"/>
<path d="M1686,52 l5,1 l-1,5" fill="none" stroke="#666" stroke-width="0"/>
<path d="M1691,49.5 h8 v3 h-8 z" fill="#d2d2d2"/>
<path d="M1697,48 l4.5,5.5 l-6.5,1.5 z" fill="#666"/>
<path d="M1686,61 q3,4 7,3 M1689,59 l-2,5 l5,1" fill="none" stroke="#666" stroke-width="1.8"/>
<!-- clock -->
<circle cx="1734" cy="58" r="9" fill="#d2d2d2" stroke="#666" stroke-width="1.6"/>
<circle cx="1734" cy="58" r="6.5" fill="#666"/>
<path d="M1734,53.5 v5 h4" fill="none" stroke="#d2d2d2" stroke-width="1.6"/>
<text x="1746" y="64.5" font-family="Liberation Sans" font-size="15" fill="#666">1</text>
<!-- bell -->
<path d="M1795.5,50 q6,0 6.5,7 v5 l2.5,3 h-18 l2.5,-3 v-5 q0.5,-7 6.5,-7 z" fill="#666"/>
<path d="M1792.5,66.5 a3,2.5 0 0 0 6,0 z" fill="#666"/>
<circle cx="1800" cy="53" r="4" fill="#1a9ae8" stroke="#d2d2d2" stroke-width="1"/>
<!-- help -->
<circle cx="1836" cy="58.5" r="9.8" fill="#666"/>
<path d="M1832.8,55.5 q0,-3.8 3.4,-3.8 q3.6,0 3.6,3.3 q0,2 -2.3,3.2 q-1.2,0.8 -1.2,2.6" fill="none" stroke="#fff" stroke-width="2.2"/>
<circle cx="1836.2" cy="64.2" r="1.4" fill="#fff"/>
<!-- avatar -->
<defs><clipPath id="avc"><circle cx="1887.5" cy="58.5" r="14"/></clipPath></defs>
<circle cx="1887.5" cy="58.5" r="14" fill="#a9bcd8"/>
<g clip-path="url(#avc)" fill="#5a6a80"><ellipse cx="1887.5" cy="55" rx="6" ry="8"/><path d="M1873,75 q2,-11 14.5,-12 q12.5,1 14.5,12 z"/></g>

<defs>
<symbol id="eye" viewBox="0 0 20 11"><path d="M0.5,5.5 q9.5,-10 19,0 q-9.5,10 -19,0 z" fill="currentColor"/><circle cx="10" cy="5.5" r="3.6" fill="#c4c4c4"/><circle cx="10" cy="5.5" r="2" fill="currentColor"/></symbol>
<symbol id="eyex" viewBox="0 0 20 11"><path d="M1,5.5 q9,-9.5 18,0 q-9,9.5 -18,0 z" fill="none" stroke="currentColor" stroke-width="1.3"/><circle cx="10" cy="5.5" r="2.6" fill="none" stroke="currentColor" stroke-width="1.3"/><path d="M4,0.5 L16,10.5" stroke="currentColor" stroke-width="1.3"/></symbol>
<symbol id="fold" viewBox="0 0 20 15"><path d="M0,0 h7 l1.5,2 h11.5 v13 h-20 z" fill="currentColor"/><path d="M0,3 h20" stroke="#ececec" stroke-width="0.8"/></symbol>
<symbol id="body" viewBox="0 0 18 18"><path d="M2,4 q7,-5 14,0 v10 q-7,5 -14,0 z" fill="#e8a92a" stroke="#9a6a10" stroke-width="1"/><path d="M2,4 q7,4 14,0 M3,9 h12 M3,12 h12" fill="none" stroke="#9a6a10" stroke-width="0.9"/><path d="M4,6 h10 v2 h-10 z M4,10 h10 v1.5 h-10 z" fill="#f6d27a"/></symbol>
</defs>
<!-- header -->
<path d="M18,205 l6.5,-4 v8 z M12,205 l6.5,-4 v8 z" fill="#333"/>
<circle cx="360.4" cy="204.5" r="6" fill="#333"/><path d="M356.5,204.5 h7.8" stroke="#fff" stroke-width="1.8"/>
<circle cx="360.4" cy="1001" r="6" fill="#333"/><path d="M356.5,1001 h7.8 M360.4,997.1 v7.8" stroke="#fff" stroke-width="1.8"/>
<!-- tree toggles -->
<path d="M29,243 l9,-8 v8 z" fill="#222"/>
<path d="M52.5,264 l7.5,5.2 l-7.5,5.2 z" fill="none" stroke="#333" stroke-width="1.2"/>
<path d="M52.5,294 l7.5,5.2 l-7.5,5.2 z" fill="none" stroke="#333" stroke-width="1.2"/>
<path d="M52.5,324 l7.5,5.2 l-7.5,5.2 z" fill="none" stroke="#333" stroke-width="1.2"/>
<path d="M51.5,363 l9,-8 v8 z" fill="#222"/>
<!-- row icons -->
<use href="#eye" x="61" y="234" width="20" height="11" color="#8a8a8a"/>
<defs><linearGradient id="cubeg" x1="0" y1="0" x2="1" y2="1"><stop offset="0" stop-color="#f4f6f8"/><stop offset="1" stop-color="#b8bcc4"/></linearGradient><radialGradient id="radg" cx="0.4" cy="0.35" r="0.7"><stop offset="0" stop-color="#fafafa"/><stop offset="1" stop-color="#c8c8c8"/></radialGradient></defs><path d="M95,231 l4,-2.5 h12 v13.5 l-4,3 h-12 z" fill="url(#cubeg)" stroke="#444" stroke-width="1"/>
<path d="M95,231 h12 l4,-2.5 M107,231 v14.5" fill="none" stroke="#555" stroke-width="0.9"/>
<circle cx="224.6" cy="239.5" r="8" fill="url(#radg)" stroke="#666" stroke-width="1.2"/>
<circle cx="224.6" cy="239.5" r="3.2" fill="#333"/>
<!-- gear -->
<g transform="translate(85.2,268.2)"><circle r="5.2" fill="none" stroke="#6a6a6a" stroke-width="3.4"/>
<path d="M-1.6,-8 h3.2 v3 h-3.2 z M-1.6,5 h3.2 v3 h-3.2 z M-8,-1.6 v3.2 h3 v-3.2 z M5,-1.6 v3.2 h3 v-3.2 z" fill="#6a6a6a"/>
<path d="M-1.6,-8 h3.2 v3 h-3.2 z M-1.6,5 h3.2 v3 h-3.2 z M-8,-1.6 v3.2 h3 v-3.2 z M5,-1.6 v3.2 h3 v-3.2 z" fill="#6a6a6a" transform="rotate(45)"/>
<circle r="2" fill="#ececec"/></g>
<use href="#fold" x="77" y="291" width="20.5" height="15.5" color="#8c8c8c"/>
<use href="#eyex" x="77.5" y="324" width="19.5" height="11" color="#9a9a9a"/>
<use href="#fold" x="108.3" y="321" width="20.5" height="15.5" color="#8c8c8c"/>
<use href="#eye" x="77.5" y="354" width="19.5" height="11" color="#8a8a8a"/>
<use href="#fold" x="108.3" y="351" width="20.5" height="15.5" color="#8c8c8c"/>
<path d="M105,367 L199,367" fill="none" stroke="#4a5666" stroke-width="2.4" stroke-dasharray="2.5,2.2"/>
<use href="#eyex" x="100" y="384" width="19" height="11" color="#9a9a9a"/>
<use href="#body" x="131" y="380" width="19" height="18"/>
<use href="#eye" x="100" y="414" width="19" height="11" color="#8a8a8a"/>
<use href="#body" x="131" y="410" width="19" height="18"/>

<!-- Direct edit -->
<g stroke="#b39440" stroke-width="0.6"><polygon points="524,189 535,189 539,192.5 539,201 535,204 524,204 521,201 521,192.5" fill="#d8bc64"/><polygon points="524,189 535,189 539,192.5 521,192.5" fill="#b89848"/><path d="M525,192.5 v11.5 M534,192.5 v11.5 M521,198 h18 M525,204 l9,-6" fill="none"/></g>
<polygon points="536,183.5 537,186.5 540,185.5 538.5,188 541,189.5 538,190 539,193 536.5,191 534.5,193.5 534,190.5 531,190.5 533,188.5 531.5,186 534.5,186.8" fill="#f5a300"/>
<!-- Remesh -->
<rect x="521" y="210.5" width="8.5" height="17" fill="#fafafa" stroke="#8a8a8a" stroke-width="0.8"/>
<path d="M522,227 l3,-16 l3,16" fill="none" stroke="#b5b5b5" stroke-width="0.5"/>
<rect x="531.5" y="210.5" width="9" height="17" fill="#d8bc64" stroke="#c3a550" stroke-width="0.6"/>
<path d="M531.5,215 h9 M531.5,219 h9 M531.5,223 h9 M536,210.5 v17" stroke="#b39440" stroke-width="0.4"/>
<circle cx="530.5" cy="219" r="1" fill="#111"/><path d="M528,219 h4" stroke="#111" stroke-width="1"/>
<!-- Reduce -->
<rect x="521" y="235.5" width="8.5" height="17" fill="#f2f2f2" stroke="#8a8a8a" stroke-width="0.8"/>
<path d="M521,240 h8.5 M521,244 h8.5 M521,248 h8.5 M525.2,235.5 v17 M521,244 l8.5,-8 M521,252 l8.5,-8" stroke="#b5b5b5" stroke-width="0.4"/>
<rect x="531.5" y="235.5" width="9" height="17" fill="#d8bc64" stroke="#c3a550" stroke-width="0.6"/>
<path d="M531.5,244 l9,-8.5 M531.5,252.5 l9,-8.5" stroke="#b39440" stroke-width="0.4"/>
<path d="M528,244 h4" stroke="#111" stroke-width="1"/>
<!-- Plane cut -->
<polygon points="525,263 529,261 537,261 529,265 529,277 524,273 523,265" fill="#d4b55a"/>
<polygon points="528.5,264.5 537,261 537,273 528.5,277" fill="#ef8c4a" stroke="#f7e6c8" stroke-width="0.6"/>
<!-- Shell -->
<polygon points="521,289 526,284 541,284 536,289" fill="#f4f4f4" stroke="#777" stroke-width="0.8"/>
<polygon points="536,289 541,284 541,298.5 536,303.5" fill="#c9c9c9" stroke="#777" stroke-width="0.8"/>
<rect x="521" y="289" width="15" height="14.5" fill="#e6e6e6" stroke="#777" stroke-width="0.8"/>
<path d="M523.5,291.5 h3 v4.5 h7.5 v5.5 h-10.5 z" fill="#d6b95c"/>
<!-- Combine -->
<path d="M530,309.5 h11 v11 l-3,3 v2 l-3,3 h-14 v-12 l3,-3 h6 z" fill="#dcbf66"/>
<path d="M530,309.5 l-2,3 v3.5 M541,309.5 l-3,3 h-8" fill="none" stroke="#c7a74c" stroke-width="0.6"/>
<!-- Smooth -->
<path d="M521.5,338.5 a8.7,3.8 0 0 1 17.4,0 v10.5 a8.7,3.8 0 0 1 -17.4,0 z" fill="#d8bc64" stroke="#c0a048" stroke-width="0.6"/>
<ellipse cx="530.2" cy="338.5" rx="8.7" ry="3.8" fill="#c8a850"/>
<path d="M523,345 q7,3 15,0" fill="none" stroke="#b89848" stroke-width="0.5"/>
<!-- Reverse normal -->
<rect x="521" y="359" width="17" height="17.5" fill="#d8bc64"/>
<path d="M521,376.5 l8,-17.5 l9,17.5" fill="none" stroke="#b39440" stroke-width="0.5"/>
<rect x="530" y="372.5" width="11.5" height="6.5" fill="#222"/>
<path d="M532,375.7 h7.5" stroke="#fff" stroke-width="1"/><path d="M532,375.7 l2,-1.8 v3.6 z M539.5,375.7 l-2,-1.8 v3.6 z" fill="#fff"/>
<!-- Separate -->
<rect x="521" y="385.5" width="8.5" height="15" fill="#d8bc64"/>
<rect x="532" y="385.5" width="8.5" height="15" fill="#d8bc64"/>
<path d="M521,393 h8.5 M532,393 h8.5" stroke="#b39440" stroke-width="0.4"/>
<path d="M523,403 h15" stroke="#333" stroke-width="0.9"/><path d="M521.5,403 l2.5,-1.8 v3.6 z M539.5,403 l-2.5,-1.8 v3.6 z" fill="#333"/>
<!-- Move/copy -->
<path d="M530.7,412.5 l-3,4 h2.2 v4.2 h-4.2 v-2.2 l-4,3 l4,3 v-2.2 h4.2 v4.2 h-2.2 l3,4 l3,-4 h-2.2 v-4.2 h4.2 v2.2 l4,-3 l-4,-3 v2.2 h-4.2 v-4.2 h2.2 z" fill="#222"/>
<!-- Scale mesh -->
<rect x="521" y="437" width="19" height="19" fill="#d8bc64"/>
<rect x="521.5" y="445.5" width="9.5" height="10.5" fill="#f6f6f6" stroke="#777" stroke-width="0.8"/>
<!-- Delete -->
<path d="M522.5,464 l15.5,15.5 M538,464 l-15.5,15.5" stroke="#e8262a" stroke-width="3"/>
<!-- Remove -->
<circle cx="534.3" cy="497.5" r="4.8" fill="#8fb3e0" stroke="#2a4a7a" stroke-width="0.8"/>
<path d="M524,497.5 h6" stroke="#111" stroke-width="1.6"/><path d="M520.8,497.5 l4.5,-3.5 v7 z" fill="#111"/>
<!-- Convert mesh -->
<rect x="521" y="513" width="9.5" height="11.5" fill="#d3b55c" stroke="#b39440" stroke-width="0.5"/>
<path d="M532,523 a4.2,1.8 0 0 1 8.4,0 v8 a4.2,1.8 0 0 1 -8.4,0 z" fill="#f4f4f4" stroke="#777" stroke-width="0.8"/>
<path d="M522.5,526 v4 h5" fill="none" stroke="#222" stroke-width="0.9"/>
<circle cx="724.5" cy="518" r="1.4" fill="#222"/><circle cx="724.5" cy="523.8" r="1.4" fill="#222"/><circle cx="724.5" cy="529.6" r="1.4" fill="#222"/>
<!-- Physical material -->
<defs><pattern id="chk" width="6" height="6" patternUnits="userSpaceOnUse" x="521" y="539"><rect width="6" height="6" fill="#eee"/><rect width="3" height="3" fill="#555"/><rect x="3" y="3" width="3" height="3" fill="#555"/></pattern>
<clipPath id="pmc"><circle cx="530.7" cy="548.7" r="9"/></clipPath></defs>
<circle cx="530.7" cy="548.7" r="9" fill="url(#chk)" stroke="#555" stroke-width="0.9"/>
<!-- Appearance -->
<g transform="translate(530.7,574.2)">
<path d="M0,0 L0,-9.3 A9.3,9.3 0 0 1 8.05,-4.65 z" fill="#f5c02a"/>
<path d="M0,0 L8.05,-4.65 A9.3,9.3 0 0 1 8.05,4.65 z" fill="#f07a30"/>
<path d="M0,0 L8.05,4.65 A9.3,9.3 0 0 1 0,9.3 z" fill="#e8406a"/>
<path d="M0,0 L0,9.3 A9.3,9.3 0 0 1 -8.05,4.65 z" fill="#8a4ae0"/>
<path d="M0,0 L-8.05,4.65 A9.3,9.3 0 0 1 -8.05,-4.65 z" fill="#2a8ae8"/>
<path d="M0,0 L-8.05,-4.65 A9.3,9.3 0 0 1 0,-9.3 z" fill="#3ac070"/>
</g>
<!-- Volumetric lattice -->
<g fill="none" stroke="#5aaae8" stroke-width="1.3"><circle cx="527" cy="594.5" r="4.2"/><circle cx="534" cy="598" r="4.2"/><circle cx="527" cy="602" r="4.2"/></g>
<!-- fx -->
<text x="520" y="633" font-family="Liberation Serif" font-style="italic" font-size="19" fill="#333">f</text>
<text x="528" y="633" font-family="Liberation Serif" font-style="italic" font-size="17" fill="#333">x</text>
<!-- Compute all -->
<rect x="524.5" y="641" width="12.5" height="19" rx="1.5" fill="#6a6a6a"/>
<circle cx="530.7" cy="645.5" r="3.3" fill="#e8262a"/>
<circle cx="530.7" cy="655" r="3.6" fill="#2ab050" stroke="#fff" stroke-width="0.8"/>

<defs>
<linearGradient id="ycyl" x1="0" x2="1" y1="0" y2="0"><stop offset="0" stop-color="#dcc070"/><stop offset="0.5" stop-color="#e6cc80"/><stop offset="1" stop-color="#d8bb68"/></linearGradient>
<linearGradient id="gcyl" x1="0" x2="1" y1="0" y2="0"><stop offset="0" stop-color="#d2cfc3"/><stop offset="0.55" stop-color="#dedbd0"/><stop offset="1" stop-color="#d6d3c7"/></linearGradient>
</defs>
<!-- yellow mesh shape -->
<g>
<path d="M766.4,774.4 L813.6,801.6 L813.6,903.6 L766.4,876.4 Z" fill="#e4c474"/>
<path d="M903.9,799.5 L947,773.6 L947,875 L903.9,900 Z" fill="#e0c070"/>
<path d="M813.6,801.6 Q856.7,822 903.9,799.5 L903.9,900 Q856.7,922 813.6,903.6 Z" fill="url(#ycyl)"/>
<path d="M856.7,721.7 L947,773.6 L903.9,799.5 Q856.7,822 813.6,801.6 L766.4,774.4 Z" fill="#eacb7e"/>
<g stroke="#b0924a" stroke-width="0.6" fill="none" opacity="0.9">
<path d="M856.7,774.4 L811,748 M856.7,774.4 L902,748"/>
<path d="M856.7,774.4 L813.6,801.6 M856.7,774.4 L816.5,802.9 M856.7,774.4 L819.4,804.1 M856.7,774.4 L822.3,805.3 M856.7,774.4 L825.2,806.3 M856.7,774.4 L828.1,807.2 M856.7,774.4 L831.0,808.0 M856.7,774.4 L833.9,808.8 M856.7,774.4 L836.9,809.4 M856.7,774.4 L839.8,810.0 M856.7,774.4 L842.8,810.4 M856.7,774.4 L845.8,810.8 M856.7,774.4 L848.7,811.1 M856.7,774.4 L851.7,811.2 M856.7,774.4 L854.7,811.3 M856.7,774.4 L857.7,811.3 M856.7,774.4 L860.7,811.2 M856.7,774.4 L863.8,810.9 M856.7,774.4 L866.8,810.6 M856.7,774.4 L869.8,810.2 M856.7,774.4 L872.9,809.7 M856.7,774.4 L875.9,809.1 M856.7,774.4 L879.0,808.4 M856.7,774.4 L882.1,807.7 M856.7,774.4 L885.2,806.8 M856.7,774.4 L888.3,805.8 M856.7,774.4 L891.4,804.7 M856.7,774.4 L894.5,803.6 M856.7,774.4 L897.6,802.3 M856.7,774.4 L900.8,801.0 M856.7,774.4 L903.9,799.5" stroke-width="0.45"/>
<path d="M815.0,802.2 L817.5,904.2 M817.8,803.4 L815.3,905.2 M820.7,804.5 L823.2,906.2 M823.5,805.6 L821.0,907.2 M826.4,806.5 L828.9,908.0 M829.2,807.4 L826.7,908.8 M832.0,808.1 L834.5,909.4 M834.9,808.8 L832.4,910.0 M837.7,809.4 L840.2,910.5 M840.5,810.0 L838.0,911.0 M843.4,810.4 L845.9,911.3 M846.2,810.7 L843.7,911.6 M849.1,811.0 L851.6,911.8 M851.9,811.2 L849.4,911.9 M854.7,811.3 L857.2,912.0 M857.6,811.3 L855.1,911.9 M860.4,811.2 L862.9,911.8 M863.3,811.1 L860.8,911.6 M866.1,810.8 L868.6,911.3 M868.9,810.5 L866.4,911.0 M871.8,810.1 L874.3,910.5 M874.6,809.6 L872.1,910.0 M877.5,809.0 L880.0,909.4 M880.3,808.3 L877.8,908.7 M883.1,807.6 L885.6,908.0 M886.0,806.7 L883.5,907.1 M888.8,805.8 L891.3,906.2 M891.6,804.8 L889.1,905.2 M894.5,803.7 L897.0,904.1 M897.3,802.6 L894.8,903.0 M900.2,801.3 L902.7,901.8 M903.0,799.9 L900.5,900.4" stroke-width="0.5"/>
<path d="M813.6,852 Q856.7,872 903.9,851"/>
<path d="M766.4,825 L813.6,852 M766.4,774.4 L813.6,852 M766.4,825 L813.6,903.6 M903.9,851 L947,825 M947,773.6 L903.9,851 M947,825 L903.9,900"/>
</g>
</g>
<!-- gray solid shape -->
<g>
<path d="M962.2,812.5 L1006.7,838.2 L1006.7,941 L962.2,915.3 Z" fill="#d9d6ca"/>
<path d="M1097,838.2 L1140,812.5 L1140,914 L1097,941 Z" fill="#d6d3c7"/>
<path d="M1006.7,838.2 Q1051,858 1097,838.2 L1097,941 Q1051,962 1006.7,941 Z" fill="url(#gcyl)"/>
<path d="M1051,760.6 L1140,812.5 L1097,838.2 Q1051,858 1006.7,838.2 L962.2,812.5 Z" fill="#e3e0d5"/>
<g stroke="#6a6860" stroke-width="0.9" fill="none">
<path d="M962.2,812.5 L1006.7,838.2 Q1051,858 1097,838.2 L1140,812.5"/>
<path d="M1006.7,838.2 V941 M1097,838.2 V941"/>
</g>
<path d="M962.2,812.5 L1051,760.6 L1140,812.5 L1140,914 L1097,941 Q1051,962 1006.7,941 L962.2,915.3 Z" fill="none" stroke="#c8c5b8" stroke-width="0.6"/>
</g>

<!-- nav bar icons -->
<g fill="none" stroke="#555" stroke-width="1.1">
<ellipse cx="827.3" cy="998.5" rx="9" ry="5"/>
<ellipse cx="827.3" cy="998.5" rx="4.5" ry="9.5"/>
</g>
<path d="M824.5,998.5 h5.6 M827.3,995.7 v5.6" stroke="#555" stroke-width="1"/>
<path d="M843.8,997.3 h7.5 l-3.75,4.6 z" fill="#222"/>
<rect x="860" y="996" width="17" height="11.5" fill="#e8e8e8" stroke="#555" stroke-width="1.1"/>
<rect x="862.5" y="999" width="12" height="6" fill="#9a9a9a"/>
<path d="M862,996 l3,-4 h10 l2,4" fill="#ddd" stroke="#555" stroke-width="1"/>
<path d="M896,1008 q-3,-3 -4.5,-7 q-0.5,-2 1.5,-1.5 l2,2 v-10 q1,-1.5 2,0 v7 v-9.5 q1,-1.5 2,0 v9.5 v-9 q1,-1.5 2,0 v9 v-7.5 q1,-1.5 2,0 v10 q0,5 -3,8.5 z" fill="#fff" stroke="#444" stroke-width="1" stroke-linejoin="round"/>
<circle cx="931.5" cy="997.5" r="6.8" fill="#fff" stroke="#444" stroke-width="1.4"/>
<path d="M936.5,1002.5 l6,5.5" stroke="#333" stroke-width="2.6"/>
<path d="M939,990 h4 M941,988 v4" stroke="#444" stroke-width="0.9"/>
<circle cx="964" cy="997.5" r="6.8" fill="#fff" stroke="#444" stroke-width="1.4"/>
<rect x="961" y="994" width="6" height="7" fill="none" stroke="#555" stroke-width="0.9"/>
<path d="M969,1002.5 l6,5.5" stroke="#333" stroke-width="2.6"/>
<path d="M982.5,997.3 h7 l-3.5,4.6 z" fill="#222"/>
<rect x="998" y="989.5" width="19" height="14" fill="#8ab4e0" stroke="#666" stroke-width="1.1"/>
<path d="M1004,1006.5 h7" stroke="#666" stroke-width="2"/><path d="M1007.5,1003.5 v3" stroke="#666" stroke-width="1.4"/>
<path d="M1020,997.3 h7 l-3.5,4.6 z" fill="#222"/>
<rect x="1036.5" y="990" width="18" height="18" fill="#d8d8d8" stroke="#666" stroke-width="1"/>
<path d="M1036.5,994.5 h18 M1036.5,999 h18 M1036.5,1003.5 h18 M1041,990 v18 M1045.5,990 v18 M1050,990 v18" stroke="#666" stroke-width="0.8"/>
<path d="M1059.3,997.3 h7 l-3.5,4.6 z" fill="#222"/>
<rect x="1075" y="990" width="19" height="17.5" fill="#7aa6d8" stroke="#5a7aa0" stroke-width="1"/>
<path d="M1084.5,990 v17.5 M1075,998.75 h19" stroke="#dfe8f0" stroke-width="1.2"/>
<path d="M1097,997.3 h7 l-3.5,4.6 z" fill="#222"/>
<!-- timeline playback -->
<g fill="#666">
<rect x="14.5" y="1046" width="2.4" height="15.5"/><path d="M28,1046 v15.5 l-11,-7.75 z"/>
<path d="M57.7,1046 v15.5 l-12.3,-7.75 z"/><rect x="59.3" y="1050.5" width="2" height="6"/>
<path d="M76.5,1044 v18.5 l16,-9.25 z"/>
<rect x="106" y="1050.5" width="2" height="6"/><path d="M110,1046 v15.5 l12.3,-7.75 z"/>
<path d="M139,1046 v15.5 l11,-7.75 z"/><rect x="150.5" y="1046" width="2.4" height="15.5"/>
</g>
<rect x="181.3" y="1032.5" width="174" height="8" fill="#f4a6ae"/>
<circle cx="193.8" cy="1053" r="9.7" fill="#5aacf0" stroke="#3a8ad8" stroke-width="0.8"/>
<ellipse cx="191" cy="1049" rx="5" ry="3" fill="#8ccaf8" opacity="0.7"/>
<path d="M224,1043.5 l-3.5,4.5 h2.5 v4.5 h-4.5 v-2.5 l-4.5,3.5 l4.5,3.5 v-2.5 h4.5 v4.5 h-2.5 l3.5,4.5 l3.5,-4.5 h-2.5 v-4.5 h4.5 v2.5 l4.5,-3.5 l-4.5,-3.5 v2.5 h-4.5 v-4.5 h2.5 z" fill="#222"/>
<path d="M244.5,1045.5 a3.5,1.5 0 0 1 7,0 v8 a3.5,1.5 0 0 1 -7,0 z" fill="#eee" stroke="#777" stroke-width="0.8"/>
<rect x="253" y="1052" width="10.5" height="11" rx="2" fill="#d8bc64" stroke="#b39440" stroke-width="0.6"/>
<path d="M246,1057 v4 h5" fill="none" stroke="#222" stroke-width="0.9"/>
<rect x="274" y="1044" width="9" height="19" fill="#fafafa" stroke="#888" stroke-width="0.8"/>
<rect x="284" y="1044" width="9.5" height="19" fill="#d8bc64"/>
<path d="M281,1053.5 h4" stroke="#111" stroke-width="1"/>
<rect x="304" y="1044" width="9" height="19" fill="#f2f2f2" stroke="#888" stroke-width="0.8"/>
<path d="M304,1048.5 h9 M304,1053 h9 M304,1057.5 h9 M308.5,1044 v19" stroke="#bbb" stroke-width="0.5"/>
<rect x="314" y="1044" width="9.5" height="19" fill="#d8bc64"/>
<path d="M311,1053.5 h4" stroke="#111" stroke-width="1"/>
<polygon points="337,1048 347,1048 351,1052 351,1060 347,1063 337,1063 334,1060 334,1052" fill="#d8bc64" stroke="#b39440" stroke-width="0.6"/>
<polygon points="348,1041.5 349,1044.5 352,1043.5 350.5,1046 353,1047.5 350,1048 351,1051 348.5,1049 346.5,1051.5 346,1048.5 343,1048.5 345,1046.5 343.5,1044 346.5,1044.8" fill="#f5a300"/>
<path d="M195,1074.5 h150 M195,1068 v6.5 M224,1068 v6.5 M253.5,1068 v6.5 M283.5,1068 v6.5 M313.5,1068 v6.5 M343.5,1068 v6.5" stroke="#c4c4c4" stroke-width="1.6" fill="none"/>
<path d="M351.3,1036 h15 v4 l-3,3.75 h-9 l-3,-3.75 z" fill="#555"/>
<rect x="357" y="1043" width="3" height="32.5" fill="#555"/>
<!-- settings gear -->
<g transform="translate(1893,1053)"><circle r="5.8" fill="none" stroke="#6a6a6a" stroke-width="3.6"/>
<path d="M-1.8,-9 h3.6 v3.5 h-3.6 z M-1.8,5.5 h3.6 v3.5 h-3.6 z M-9,-1.8 v3.6 h3.5 v-3.6 z M5.5,-1.8 v3.6 h3.5 v-3.6 z" fill="#6a6a6a"/>
<path d="M-1.8,-9 h3.6 v3.5 h-3.6 z M-1.8,5.5 h3.6 v3.5 h-3.6 z M-9,-1.8 v3.6 h3.5 v-3.6 z M5.5,-1.8 v3.6 h3.5 v-3.6 z" fill="#6a6a6a" transform="rotate(45)"/>
</g>
<!-- viewcube -->
<defs><radialGradient id="vcs" cx="0.5" cy="0.5" r="0.5"><stop offset="0" stop-color="#000" stop-opacity="0.18"/><stop offset="1" stop-color="#000" stop-opacity="0"/></radialGradient>
<linearGradient id="vcl" x1="0" y1="0" x2="0" y2="1"><stop offset="0" stop-color="#f4f4f4"/><stop offset="1" stop-color="#dcdcdc"/></linearGradient>
<linearGradient id="vcr" x1="0" y1="0" x2="0" y2="1"><stop offset="0" stop-color="#f0f0f0"/><stop offset="1" stop-color="#d0d0d0"/></linearGradient></defs>
<ellipse cx="1860" cy="282" rx="38" ry="9" fill="url(#vcs)"/>
<polygon points="1822.5,226 1856.2,218.2 1890.6,222.8 1859.5,232.5" fill="#f6f6f6" stroke="#666" stroke-width="0.7" stroke-dasharray="2.5,1.5"/>
<polygon points="1822.5,226 1859.5,232.5 1860.7,283 1825.1,272" fill="url(#vcl)"/>
<polygon points="1859.5,232.5 1890.6,222.8 1889.9,268.2 1860.7,283" fill="url(#vcr)"/>
<path d="M1859.5,232.5 L1860.7,283 M1890.6,222.8 L1889.9,268.2 L1860.7,283" fill="none" stroke="#555" stroke-width="0.7" stroke-dasharray="2.5,1.5"/>
<text x="0" y="0" font-family="Liberation Sans" font-size="9" fill="#707070" transform="translate(1829,254) rotate(17) scale(0.78,1.1)">FRONT</text>
<text x="0" y="0" font-family="Liberation Sans" font-size="9" fill="#707070" transform="translate(1867,262) rotate(-33) scale(0.72,1.1)">RIGHT</text>
<path d="M1821.2,219 L1825.7,271.4" stroke="#5a5ae8" stroke-width="1.6"/>
<path d="M1825.1,272 L1868,287" stroke="#f08080" stroke-width="1.6"/>
<text x="1815.5" y="215.8" font-family="Liberation Sans" font-size="11" fill="#6a6ae0">Z</text>
<text x="1869" y="293.5" font-family="Liberation Sans" font-size="11" fill="#f07878">X</text>

</svg>
</body></html>
